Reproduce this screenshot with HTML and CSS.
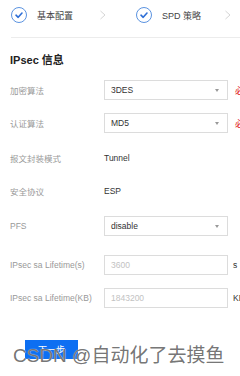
FILE: index.html
```html
<!DOCTYPE html>
<html>
<head>
    <title>IPsec 信息</title>
    <link rel="stylesheet" href="styles.css">
</head>
<body>
    <div class="page">
        <!-- 步骤条 -->
        <div class="steps">
            <div class="step">
                <span class="step-icon">
                    <svg width="16" height="16" viewBox="0 0 16 16"><circle cx="8" cy="8" r="7.5" fill="none" stroke="#5b93e0" stroke-width="1"/><path d="M5 8.2 L7.2 10.3 L11 6" fill="none" stroke="#2f6fd6" stroke-width="1.6" stroke-linecap="round" stroke-linejoin="round"/></svg>
                </span>
                <span class="step-text">基本配置</span>
                <svg class="step-arrow" width="8" height="10" viewBox="0 0 8 10"><path d="M1.5 1 L6 5 L1.5 9" fill="none" stroke="#d6d6d6" stroke-width="1"/></svg>
            </div>
            <div class="step">
                <span class="step-icon">
                    <svg width="16" height="16" viewBox="0 0 16 16"><circle cx="8" cy="8" r="7.5" fill="none" stroke="#5b93e0" stroke-width="1"/><path d="M5 8.2 L7.2 10.3 L11 6" fill="none" stroke="#2f6fd6" stroke-width="1.6" stroke-linecap="round" stroke-linejoin="round"/></svg>
                </span>
                <span class="step-text">SPD 策略</span>
                <svg class="step-arrow" width="8" height="10" viewBox="0 0 8 10"><path d="M1.5 1 L6 5 L1.5 9" fill="none" stroke="#d6d6d6" stroke-width="1"/></svg>
            </div>
        </div>

        <h2 class="title">IPsec 信息</h2>

        <div class="form">
            <div class="row gap-13">
                <label>加密算法</label>
                <div class="select">3DES<span class="caret"></span></div>
                <span class="tip">必填项</span>
            </div>
            <div class="row gap-15">
                <label>认证算法</label>
                <div class="select">MD5<span class="caret"></span></div>
                <span class="tip">必填项</span>
            </div>
            <div class="row gap-13">
                <label>报文封装模式</label>
                <span class="value">Tunnel</span>
            </div>
            <div class="row gap-15">
                <label>安全协议</label>
                <span class="value">ESP</span>
            </div>
            <div class="row gap-19">
                <label>PFS</label>
                <div class="select">disable<span class="caret"></span></div>
            </div>
            <div class="row gap-13">
                <label>IPsec sa Lifetime(s)</label>
                <div class="input">3600</div>
                <span class="unit">s</span>
            </div>
            <div class="row">
                <label>IPsec sa Lifetime(KB)</label>
                <div class="input">1843200</div>
                <span class="unit">KB</span>
            </div>
        </div>

        <button class="next-button">下一步</button>

        <div class="watermark">CSDN @自动化了去摸鱼</div>
    </div>
</body>
</html>
```

FILE: styles.css
```css
html, body { margin: 0; padding: 0; background: #fff; }
body {
    width: 240px;
    height: 376px;
    overflow: hidden;
    font-family: "Liberation Sans", "Noto Sans CJK SC", sans-serif;
    color: #333;
}
.page { position: relative; height: 376px; }

.steps {
    display: flex;
    margin-left: 11px;
    height: 37px;
    border-bottom: 1px solid #ececec;
}
.step {
    display: flex;
    align-items: center;
    width: 125px;
    flex-shrink: 0;
    height: 30px;
}
.step-icon { width: 16px; height: 16px; display: flex; }
.step-text { margin-left: 10px; font-size: 9px; color: #444; }
.step-arrow { margin-left: auto; margin-right: 29px; }

.title {
    margin: 15px 0 0 10px;
    font-size: 11px;
    font-weight: bold;
    color: #222;
    line-height: 14px;
}

.form { margin: 13px 0 0 10px; }
.row { display: flex; align-items: center; height: 20px; white-space: nowrap; }
.gap-13 { margin-bottom: 13px; }
.gap-15 { margin-bottom: 15px; }
.gap-19 { margin-bottom: 19px; }
.row label { width: 94px; flex-shrink: 0; font-size: 8.5px; color: #999; }

.select, .input {
    position: relative;
    box-sizing: border-box;
    width: 124px;
    height: 20px;
    flex-shrink: 0;
    border: 1px solid #dcdcdc;
    padding-left: 6px;
    font-size: 8.5px;
    line-height: 18px;
    color: #333;
}
.input { color: #c2c2c2; }
.caret {
    position: absolute;
    right: 8px;
    top: 8px;
    border-left: 2.5px solid transparent;
    border-right: 2.5px solid transparent;
    border-top: 3px solid #999;
}
.value { font-size: 8.5px; color: #333; }
.tip { margin-left: 7px; font-size: 9px; color: #e02020; }
.unit { margin-left: 5px; font-size: 8.5px; color: #333; }

.next-button {
    display: block;
    margin: 32px 0 0 25px;
    width: 53px;
    height: 19px;
    padding: 0;
    border: none;
    background: #0d6ff2;
    color: #fff;
    font-size: 9px;
    font-family: "Liberation Sans", "Noto Sans CJK SC", sans-serif;
}

.watermark {
    position: absolute;
    left: 13px;
    top: 344px;
    font-size: 19px;
    line-height: 24px;
    color: rgba(100, 100, 100, 0.9);
    text-shadow: 0 0 1px #fff;
    white-space: nowrap;
}
```
